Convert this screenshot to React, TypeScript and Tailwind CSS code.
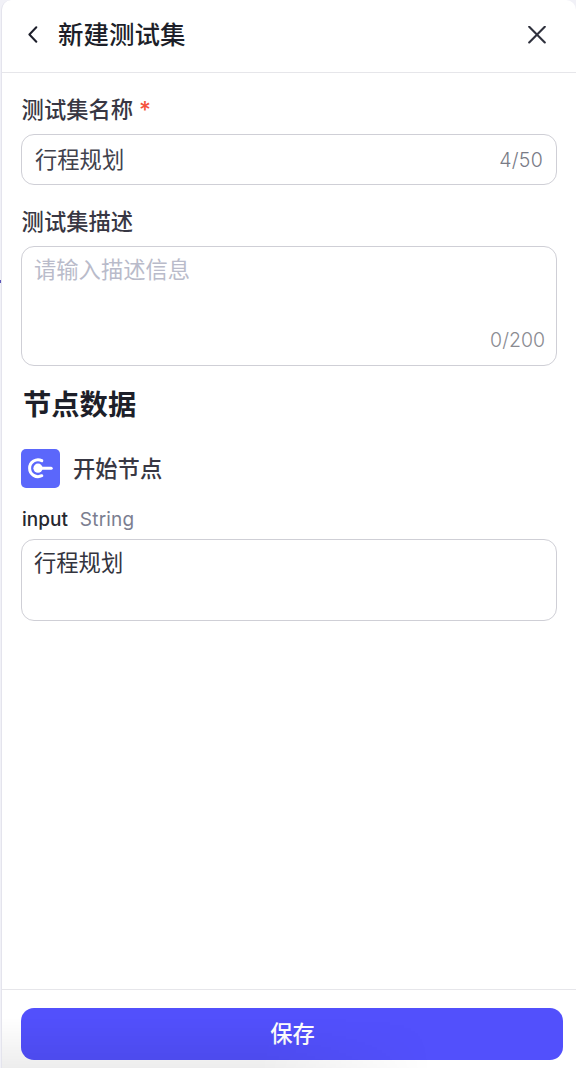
import { useState } from "react";
import clsx from "clsx";

const BOX = "w-[536px] rounded-[13px] border border-[#cfcfd6] bg-white";

function StartIcon() {
  return (
    <div className="flex size-[39px] items-center justify-center rounded-[5px] bg-[#5b67fb]">
      <svg width="39" height="39" viewBox="0 0 39 39" fill="none">
        <path
          d="M20.8 11.7A8.4 8.4 0 1 0 20.8 26.7"
          stroke="#fff"
          strokeWidth="3"
          strokeLinecap="round"
        />
        <circle cx="17" cy="19.2" r="4.6" fill="#fff" />
        <path d="M17 19.2H30.2" stroke="#fff" strokeWidth="3" strokeLinecap="round" />
      </svg>
    </div>
  );
}

export default function App() {
  const [name, setName] = useState("行程规划");
  const [desc, setDesc] = useState("");
  const [input, setInput] = useState("行程规划");

  return (
    <div className="relative h-[1068px] w-[576px] overflow-hidden bg-[#f1f1f7] pl-px font-[Inter,'Noto_Sans_CJK_SC',sans-serif]">
      {/* edge of the canvas connector behind the drawer */}
      <span className="absolute top-[280px] left-0 h-[3px] w-px bg-[#5b55b8]" />
      <div className="relative flex h-full flex-col rounded-t-[10px] border-l border-[#e4e4ed] bg-white">
        <header className="flex h-[73px] shrink-0 items-center border-b border-[#e6e6ea] pr-[30px] pb-[3px] pl-[25px]">
          <button type="button" className="flex">
            <svg width="12" height="18" viewBox="0 0 12 18" fill="none">
              <path
                d="M9.3 1.2L2.4 8.5L9.3 15.8"
                stroke="#1d1f2b"
                strokeWidth="2"
                strokeLinecap="round"
                strokeLinejoin="round"
              />
            </svg>
          </button>
          <h1 className="ml-[19px] text-[25.5px] leading-[36px] font-medium text-[#1d1f29]">
            新建测试集
          </h1>
          <button type="button" className="ml-auto flex">
            <svg width="18" height="18" viewBox="0 0 18 18" fill="none">
              <path
                d="M1.2 0.8L16.8 16.4M16.8 0.8L1.2 16.4"
                stroke="#2f313d"
                strokeWidth="2.1"
                strokeLinecap="round"
              />
            </svg>
          </button>
        </header>

        <main className="flex flex-1 flex-col pt-[21px] pl-[19px]">
          <label className="flex h-[32px] items-center pl-[0.6px] text-[22.3px] font-medium text-[#383743]">
            测试集名称
            <span className="ml-[6px] text-[23px] text-[#f5533d]">*</span>
          </label>
          <div className={clsx(BOX, "mt-[8px] flex h-[51px] items-center pr-[13px] pl-[13px]")}>
            <input
              value={name}
              onChange={(e) => setName(e.target.value)}
              className="h-full min-w-0 flex-1 pb-[3px] text-[22.3px] text-[#41424d] outline-none"
            />
            <span className="pt-[2px] text-[19.5px] font-light tracking-[0.3px] text-[#797b86]">
              4/50
            </span>
          </div>

          <label className="mt-[21px] flex h-[32px] items-center pl-[0.6px] text-[22.3px] font-medium text-[#383743]">
            测试集描述
          </label>
          <div className={clsx(BOX, "mt-[8px] flex h-[120px] flex-col px-[12px] pt-[7px]")}>
            <textarea
              value={desc}
              onChange={(e) => setDesc(e.target.value)}
              placeholder="请输入描述信息"
              className="block h-[72px] w-full resize-none text-[22.3px] leading-[32px] text-[#41424d] outline-none placeholder:text-[#b9bbca]"
            />
            <span className="-mr-px self-end text-[19.5px] leading-[28px] font-light text-[#8a8b91]">
              0/200
            </span>
          </div>

          <h2 className="mt-[19px] pl-[2px] text-[28.3px] leading-[40px] font-bold text-[#1d1f29]">
            节点数据
          </h2>
          <div className="mt-[24px] flex h-[39px] items-center">
            <StartIcon />
            <span className="ml-[13px] text-[22.3px] font-medium text-[#383743]">开始节点</span>
          </div>
          <div className="mt-[18px] flex h-[28px] items-center gap-[12px] pl-px text-[19px]">
            <span className="font-medium text-[#26272f]">input</span>
            <span className="tracking-[0.2px] text-[#7b7e90]">String</span>
          </div>
          <div className={clsx(BOX, "mt-[5px] h-[82px] px-[12px] pt-[7px]")}>
            <textarea
              value={input}
              onChange={(e) => setInput(e.target.value)}
              className="block h-[64px] w-full resize-none text-[22.3px] leading-[32px] text-[#33343e] outline-none"
            />
          </div>
        </main>

        <footer className="relative h-[79px] shrink-0 border-t border-[#e6e6ea] pt-[18px] pl-[19px]">
          <button
            type="button"
            className="flex h-[52px] w-[542px] items-center justify-center rounded-[13px] bg-[#5250fc] pl-px text-[22.3px] font-medium text-white"
          >
            保存
          </button>
          <div className="pointer-events-none absolute inset-x-0 bottom-0 h-[50px] bg-linear-to-b from-transparent to-black/7 mask-r-from-45% mask-r-to-75%" />
        </footer>
      </div>
    </div>
  );
}
